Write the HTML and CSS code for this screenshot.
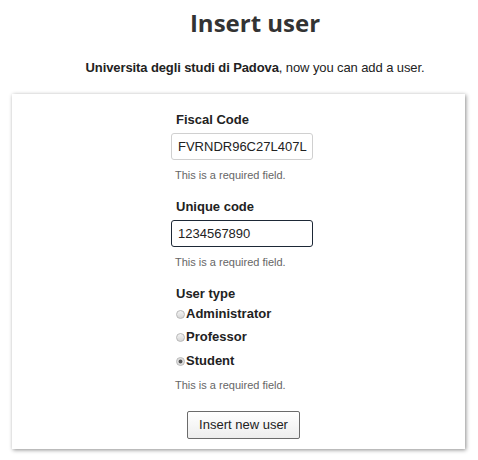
FILE: index.html
```html
<!DOCTYPE html>
<html>
<head>
<meta charset="utf-8">
<link rel="stylesheet" href="styles.css">
</head>
<body>
<header class="header">
  <h1 class="title">Insert user</h1>
  <p class="subtitle"><b>Universita degli studi di Padova</b>, now you can add a user.</p>
</header>
<div class="panel">
  <form class="form">
    <div class="field">
      <label class="label">Fiscal Code</label>
      <input class="input" type="text" value="FVRNDR96C27L407L">
      <div class="help">This is a required field.</div>
    </div>
    <div class="field">
      <label class="label">Unique code</label>
      <input class="input input-active" type="text" value="1234567890">
      <div class="help">This is a required field.</div>
    </div>
    <div class="field">
      <div class="label">User type</div>
      <div class="radios">
        <label class="radio"><span class="dot"></span>Administrator</label>
        <label class="radio"><span class="dot"></span>Professor</label>
        <label class="radio"><span class="dot dot-checked"></span>Student</label>
      </div>
      <div class="help help-last">This is a required field.</div>
    </div>
    <div class="actions">
      <button type="button" class="button">Insert new user</button>
    </div>
  </form>
</div>
</body>
</html>
```
FILE: styles.css
```css
html, body {
  margin: 0;
  padding: 0;
  background: #fff;
}
body {
  font-family: "Liberation Sans", Arial, sans-serif;
  color: #333;
  width: 478px;
  height: 460px;
  overflow: hidden;
}
.header {
  padding-left: 32px;
}
.title {
  margin: 0;
  padding-top: 8px;
  font-family: "Open Sans", sans-serif;
  font-weight: 700;
  font-size: 24px;
  line-height: 30px;
  text-align: center;
  color: #333;
}
.subtitle {
  margin: 22px 0 0 0;
  font-size: 13px;
  line-height: 16px;
  text-align: center;
  color: #222;
  letter-spacing: -0.1px;
}
.subtitle b {
  color: #222;
}
.panel {
  margin: 18px 13px 0 12px;
  padding: 18px 0 10px 7px;
  box-shadow: 1px 1px 4px rgba(0, 0, 0, 0.45);
  display: flex;
  justify-content: center;
  background: #fff;
}
.form {
  width: 142px;
  display: flex;
  flex-direction: column;
}
.field {
  display: flex;
  flex-direction: column;
}
.field + .field {
  margin-top: 17px;
}
.label {
  display: block;
  padding-left: 5px;
  font-size: 13px;
  line-height: 16px;
  font-weight: bold;
  color: #222;
  margin-bottom: 5px;
}
.input {
  box-sizing: border-box;
  width: 142px;
  height: 27px;
  margin: 0;
  padding: 0 4px 0 6px;
  border: 1px solid #d0d0d0;
  border-radius: 3px;
  font-family: "Liberation Sans", Arial, sans-serif;
  font-size: 13px;
  color: #222;
  background: #fff;
  outline: none;
}
.input-active {
  border-color: #1d2836;
}
.help {
  margin-top: 8px;
  padding-left: 4px;
  font-size: 11px;
  line-height: 14px;
  color: #666;
}
.radios {
  display: flex;
  flex-direction: column;
  gap: 7.3px;
  margin-top: -1px;
}
.radio {
  display: flex;
  align-items: center;
  padding-left: 5px;
  font-size: 13px;
  line-height: 16px;
  font-weight: bold;
  color: #222;
}
.dot {
  box-sizing: border-box;
  width: 9px;
  height: 9px;
  margin-right: 1px;
  margin-top: 1px;
  border-radius: 50%;
  border: 1px solid #b8b8b8;
  background: linear-gradient(#f4f4f4, #d6d6d6);
}
.dot-checked {
  background: radial-gradient(circle, #555 0, #555 1.5px, #d8d8d8 2.3px, #ececec 4px);
}
.help-last {
  margin-top: 9px;
}
.actions {
  margin-top: 19px;
  display: flex;
  justify-content: center;
  padding-left: 3px;
}
.button {
  box-sizing: border-box;
  width: 113px;
  height: 28px;
  margin: 0;
  padding: 0;
  border: 1px solid #6b6b6b;
  border-radius: 2px;
  background: linear-gradient(#ffffff, #ededed);
  font-family: "Liberation Sans", Arial, sans-serif;
  font-size: 13px;
  color: #222;
}
```
